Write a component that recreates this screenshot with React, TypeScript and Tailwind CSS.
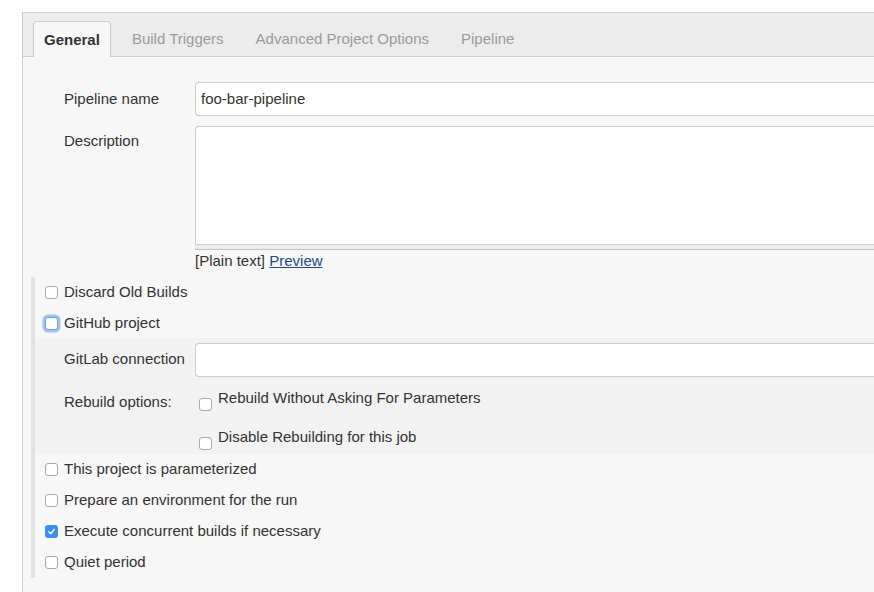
import React from "react";

const font = { fontFamily: '"Liberation Sans", Arial, Helvetica, sans-serif' };

function Checkbox({ checked, focused }: { checked?: boolean; focused?: boolean }) {
  if (checked) {
    return (
      <span className="flex h-[13px] w-[13px] shrink-0 items-center justify-center rounded-[3px] bg-[#3b8ff0]">
        <svg width="9" height="9" viewBox="0 0 10 10">
          <path d="M2 5.3 L4.2 7.5 L8 2.6" fill="none" stroke="white" strokeWidth="1.6" strokeLinecap="round" strokeLinejoin="round" />
        </svg>
      </span>
    );
  }
  return (
    <span
      className={
        focused
          ? "h-[13px] w-[13px] shrink-0 rounded-[3px] border border-[#6a9fe0] bg-white shadow-[0_0_0_2.5px_#9cc4f5]"
          : "h-[13px] w-[13px] shrink-0 rounded-[3px] border border-[#a9a9a9] bg-white"
      }
    />
  );
}

function CheckRow({ label, checked, focused }: { label: string; checked?: boolean; focused?: boolean }) {
  return (
    <div className="flex h-[31px] items-center gap-[6px] pl-[10px]">
      <Checkbox checked={checked} focused={focused} />
      <span>{label}</span>
    </div>
  );
}

const tabs = ["General", "Build Triggers", "Advanced Project Options", "Pipeline"];

export default function App() {
  return (
    <div className="h-[592px] overflow-hidden bg-white pl-[22px] pt-[12px] text-[15px] text-[#333]" style={font}>
      <div className="h-[600px] w-[900px] border-l border-t border-[#cccccc] bg-[#f7f7f7]">
        <div className="flex h-[44px] items-end gap-[10px] border-b border-[#cccccc] bg-[#ececec] pl-[10px]">
          {tabs.map((tab, i) => (
            <div
              key={tab}
              className={
                i === 0
                  ? "-mb-px flex h-[36px] items-center rounded-t-[4px] border border-b-0 border-[#cccccc] bg-[#f7f7f7] px-[10px] pt-[1px] font-bold text-[#333]"
                  : "flex h-[35px] items-center px-[11px] pt-[1px] text-[#9a9a9a]"
              }
            >
              {tab}
            </div>
          ))}
        </div>

        <div className="mt-[25px] flex h-[34px] items-center">
          <div className="w-[172px] pl-[41px]">Pipeline name</div>
          <div className="flex h-[34px] flex-1 items-center rounded-l-[4px] border border-r-0 border-[#cccccc] bg-white pl-[5px]">
            foo-bar-pipeline
          </div>
        </div>

        <div className="mt-[10px] flex">
          <div className="w-[172px] pl-[41px] pt-[4px]">Description</div>
          <div className="flex-1">
            <div className="h-[119px] rounded-tl-[4px] border border-r-0 border-[#cccccc] bg-white" />
            <div className="h-[5px] border-b border-[#c4c4c4] bg-[#ececec]" />
            <div className="flex h-[22px] items-center">
              [Plain text]&nbsp;
              <span className="text-[#204a87] underline">Preview</span>
            </div>
          </div>
        </div>

        <div className="ml-[8px] mt-[5px] border-l-4 border-[#e2e2e2]">
          <CheckRow label="Discard Old Builds" />
          <div className="h-[30px]">
            <div className="flex h-[31px] items-center gap-[6px] pl-[10px]">
              <Checkbox focused />
              <span>GitHub project</span>
            </div>
          </div>
          <div className="bg-[#f2f2f2] pb-[4px] pt-[5px]">
            <div className="flex h-[34px] items-center">
              <div className="w-[160px] pl-[29px] pb-[2px]">GitLab connection</div>
              <div className="h-[34px] flex-1 rounded-l-[4px] border border-r-0 border-[#cccccc] bg-white" />
            </div>
            <div className="mt-[8px] flex">
              <div className="w-[160px] pl-[29px] pt-[6px]">Rebuild options:</div>
              <div className="flex flex-col gap-[13px]">
                <div className="flex h-[26px] items-end gap-[6px] pl-[4px]">
                  <Checkbox />
                  <span className="mb-[2px]">Rebuild Without Asking For Parameters</span>
                </div>
                <div className="flex h-[26px] items-end gap-[6px] pl-[4px]">
                  <Checkbox />
                  <span className="mb-[2px]">Disable Rebuilding for this job</span>
                </div>
              </div>
            </div>
          </div>
          <CheckRow label="This project is parameterized" />
          <CheckRow label="Prepare an environment for the run" />
          <CheckRow label="Execute concurrent builds if necessary" checked />
          <CheckRow label="Quiet period" />
        </div>
      </div>
    </div>
  );
}
